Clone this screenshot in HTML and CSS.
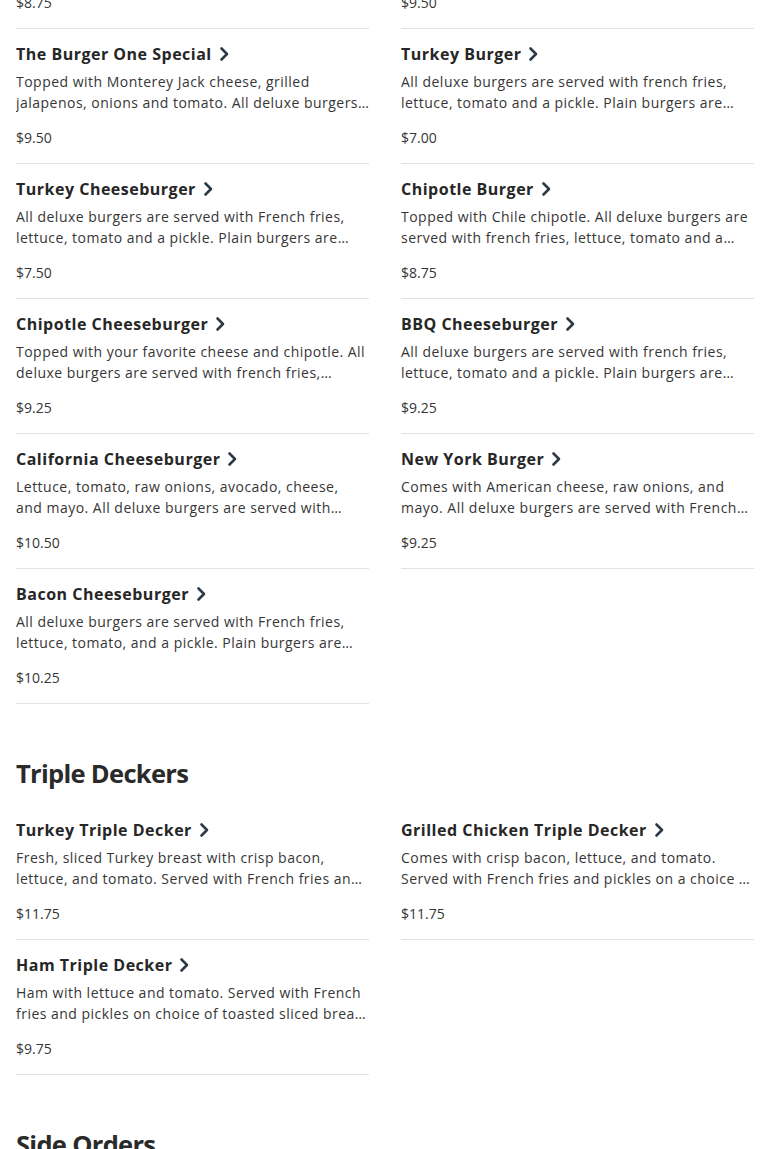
FILE: index.html
```html
<!DOCTYPE html>
<html lang="en">
<head>
<meta charset="utf-8">
<title>Menu</title>
<link rel="stylesheet" href="styles.css">
</head>
<body>
<main class="menu">
  <section class="section section--continued">
    <div class="grid">
      <div class="item item--partial"><p class="price">$8.75</p></div>
      <div class="item item--partial"><p class="price">$9.50</p></div>

      <div class="item">
        <h3 class="title">The Burger One Special <svg class="chev" viewBox="0 0 10 16"><path d="M2.5 2.5 L8 8 L2.5 13.5"/></svg></h3>
        <p class="desc">Topped with Monterey Jack cheese, grilled jalapenos, onions and tomato. All deluxe burgers are served with french fries, lettuce, tomato and a pickle.</p>
        <p class="price">$9.50</p>
      </div>
      <div class="item">
        <h3 class="title">Turkey Burger <svg class="chev" viewBox="0 0 10 16"><path d="M2.5 2.5 L8 8 L2.5 13.5"/></svg></h3>
        <p class="desc">All deluxe burgers are served with french fries, lettuce, tomato and a pickle. Plain burgers are served with lettuce and tomato.</p>
        <p class="price">$7.00</p>
      </div>

      <div class="item">
        <h3 class="title">Turkey Cheeseburger <svg class="chev" viewBox="0 0 10 16"><path d="M2.5 2.5 L8 8 L2.5 13.5"/></svg></h3>
        <p class="desc">All deluxe burgers are served with French fries, lettuce, tomato and a pickle. Plain burgers are served with lettuce and tomato.</p>
        <p class="price">$7.50</p>
      </div>
      <div class="item">
        <h3 class="title">Chipotle Burger <svg class="chev" viewBox="0 0 10 16"><path d="M2.5 2.5 L8 8 L2.5 13.5"/></svg></h3>
        <p class="desc">Topped with Chile chipotle. All deluxe burgers are served with french fries, lettuce, tomato and a pickle.</p>
        <p class="price">$8.75</p>
      </div>

      <div class="item">
        <h3 class="title">Chipotle Cheeseburger <svg class="chev" viewBox="0 0 10 16"><path d="M2.5 2.5 L8 8 L2.5 13.5"/></svg></h3>
        <p class="desc">Topped with your favorite cheese and chipotle. All deluxe burgers are served with french fries, lettuce, tomato and a pickle.</p>
        <p class="price">$9.25</p>
      </div>
      <div class="item">
        <h3 class="title">BBQ Cheeseburger <svg class="chev" viewBox="0 0 10 16"><path d="M2.5 2.5 L8 8 L2.5 13.5"/></svg></h3>
        <p class="desc">All deluxe burgers are served with french fries, lettuce, tomato and a pickle. Plain burgers are served with lettuce and tomato.</p>
        <p class="price">$9.25</p>
      </div>

      <div class="item">
        <h3 class="title">California Cheeseburger <svg class="chev" viewBox="0 0 10 16"><path d="M2.5 2.5 L8 8 L2.5 13.5"/></svg></h3>
        <p class="desc">Lettuce, tomato, raw onions, avocado, cheese, and mayo. All deluxe burgers are served with French fries and a pickle.</p>
        <p class="price">$10.50</p>
      </div>
      <div class="item">
        <h3 class="title">New York Burger <svg class="chev" viewBox="0 0 10 16"><path d="M2.5 2.5 L8 8 L2.5 13.5"/></svg></h3>
        <p class="desc">Comes with American cheese, raw onions, and mayo. All deluxe burgers are served with French fries, lettuce, tomato and a pickle.</p>
        <p class="price">$9.25</p>
      </div>

      <div class="item">
        <h3 class="title">Bacon Cheeseburger <svg class="chev" viewBox="0 0 10 16"><path d="M2.5 2.5 L8 8 L2.5 13.5"/></svg></h3>
        <p class="desc">All deluxe burgers are served with French fries, lettuce, tomato, and a pickle. Plain burgers are served with lettuce and tomato.</p>
        <p class="price">$10.25</p>
      </div>
    </div>
  </section>

  <section class="section">
    <h2 class="heading">Triple Deckers</h2>
    <div class="grid">
      <div class="item">
        <h3 class="title">Turkey Triple Decker <svg class="chev" viewBox="0 0 10 16"><path d="M2.5 2.5 L8 8 L2.5 13.5"/></svg></h3>
        <p class="desc">Fresh, sliced Turkey breast with crisp bacon, lettuce, and tomato. Served with French fries and pickles on a choice of toasted sliced bread.</p>
        <p class="price">$11.75</p>
      </div>
      <div class="item">
        <h3 class="title">Grilled Chicken Triple Decker <svg class="chev" viewBox="0 0 10 16"><path d="M2.5 2.5 L8 8 L2.5 13.5"/></svg></h3>
        <p class="desc">Comes with crisp bacon, lettuce, and tomato. Served with French fries and pickles on a choice of toasted sliced bread.</p>
        <p class="price">$11.75</p>
      </div>
      <div class="item">
        <h3 class="title">Ham Triple Decker <svg class="chev" viewBox="0 0 10 16"><path d="M2.5 2.5 L8 8 L2.5 13.5"/></svg></h3>
        <p class="desc">Ham with lettuce and tomato. Served with French fries and pickles on choice of toasted sliced bread or roll.</p>
        <p class="price">$9.75</p>
      </div>
    </div>
  </section>

  <section class="section">
    <h2 class="heading">Side Orders</h2>
  </section>
</main>
</body>
</html>
```

FILE: styles.css
```css
* { box-sizing: border-box; }

html, body {
  margin: 0;
  padding: 0;
  background: #ffffff;
  overflow: hidden;
}

body {
  font-family: "Open Sans", "Liberation Sans", sans-serif;
  color: #333333;
}

.menu {
  padding: 0 16px;
  margin-top: -8px;
}

.section {
  padding-top: 53px;
}

.section--continued {
  padding-top: 0;
}

.heading {
  margin: 0 0 16px;
  font-size: 25.5px;
  line-height: 32px;
  font-weight: 700;
  color: #2a2a2a;
  letter-spacing: -0.7px;
}

.grid {
  display: grid;
  grid-template-columns: 1fr 1fr;
  column-gap: 32px;
}

.item {
  padding: 13px 0 15px;
  border-bottom: 1px solid #e2e2e2;
}

.item--partial {
  padding-top: 0;
}

.title {
  margin: 0;
  display: flex;
  align-items: center;
  gap: 7px;
  font-size: 16px;
  line-height: 24px;
  font-weight: 700;
  color: #262626;
  letter-spacing: 0.5px;
}

.chev {
  width: 10px;
  height: 16px;
  fill: none;
  stroke: #2c3a48;
  stroke-width: 2.6;
  stroke-linecap: round;
  stroke-linejoin: round;
}

.desc {
  margin: 5px 0 0;
  font-size: 14px;
  line-height: 21px;
  color: #363636;
  letter-spacing: 0.48px;
  display: -webkit-box;
  -webkit-box-orient: vertical;
  -webkit-line-clamp: 2;
  overflow: hidden;
  height: 42px;
}

.price {
  margin: 14px 0 0;
  font-size: 14px;
  line-height: 21px;
  color: #363636;
}

.item--partial .price {
  margin-top: 0;
}
```
